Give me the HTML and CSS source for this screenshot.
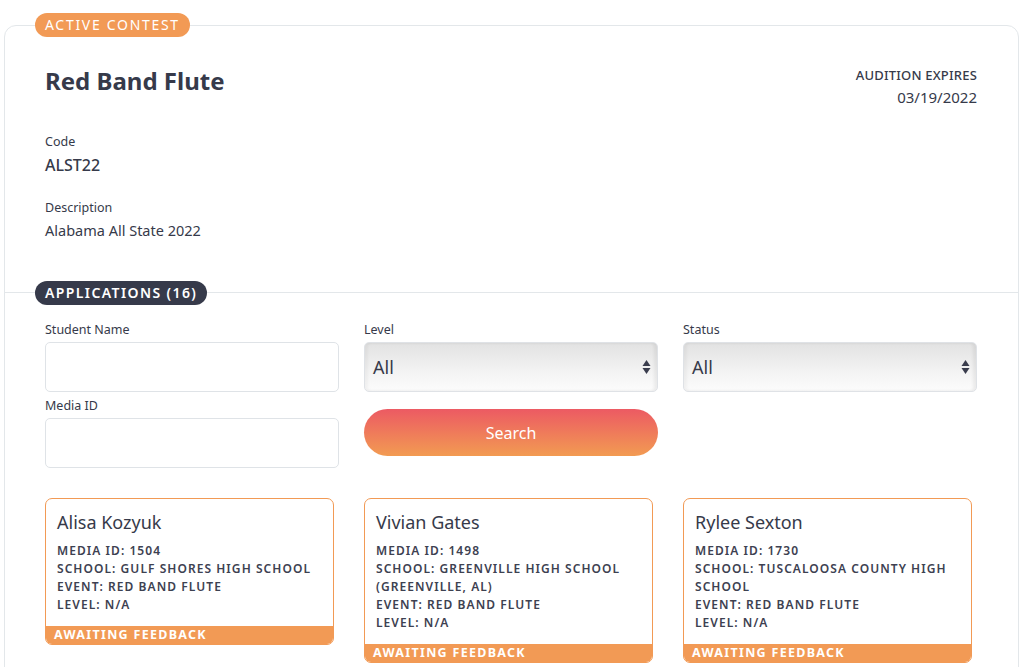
FILE: index.html
```html
<!DOCTYPE html>
<html lang="en">

<head>
  <meta charset="UTF-8">
  <meta name="viewport" content="width=device-width, initial-scale=1.0">
  <title>Red Band Flute</title>
  <link rel="stylesheet" href="styles.css">
</head>

<body>

  <div class="contest-card">
    <!-- contest info -->
    <section class="section info">
      <span class="pill pill--orange">ACTIVE CONTEST</span>
      <div class="info__top">
        <h1 class="info__title">Red Band Flute</h1>
        <div class="expires">
          <div class="expires__label">AUDITION EXPIRES</div>
          <div class="expires__date">03/19/2022</div>
        </div>
      </div>
      <div class="field">
        <div class="field__label">Code</div>
        <div class="field__value field__value--code">ALST22</div>
      </div>
      <div class="field">
        <div class="field__label">Description</div>
        <div class="field__value">Alabama All State 2022</div>
      </div>
    </section>

    <!-- applications -->
    <section class="section apps">
      <span class="pill pill--dark">APPLICATIONS (16)</span>

      <div class="filters">
        <div class="filters__col">
          <label class="filters__label">Student Name</label>
          <input class="text-input" type="text">
          <label class="filters__label">Media ID</label>
          <input class="text-input" type="text">
        </div>
        <div class="filters__col">
          <label class="filters__label">Level</label>
          <div class="select">
            <span>All</span>
            <svg class="select__arrows" width="9" height="16" viewBox="0 0 9 16">
              <path d="M4.5 1 L8.5 7 L0.5 7 Z" fill="#3a3d4d" />
              <path d="M4.5 15 L8.5 9 L0.5 9 Z" fill="#3a3d4d" />
            </svg>
          </div>
          <button class="search-btn">Search</button>
        </div>
        <div class="filters__col">
          <label class="filters__label">Status</label>
          <div class="select">
            <span>All</span>
            <svg class="select__arrows" width="9" height="16" viewBox="0 0 9 16">
              <path d="M4.5 1 L8.5 7 L0.5 7 Z" fill="#3a3d4d" />
              <path d="M4.5 15 L8.5 9 L0.5 9 Z" fill="#3a3d4d" />
            </svg>
          </div>
        </div>
      </div>

      <div class="app-list">
        <div class="app-card">
          <div class="app-card__body">
            <div class="app-card__name">Alisa Kozyuk</div>
            <div class="app-card__row">MEDIA ID: 1504</div>
            <div class="app-card__row">SCHOOL: GULF SHORES HIGH SCHOOL</div>
            <div class="app-card__row">EVENT: RED BAND FLUTE</div>
            <div class="app-card__row">LEVEL: N/A</div>
          </div>
          <div class="app-card__status">AWAITING FEEDBACK</div>
        </div>
        <div class="app-card">
          <div class="app-card__body">
            <div class="app-card__name">Vivian Gates</div>
            <div class="app-card__row">MEDIA ID: 1498</div>
            <div class="app-card__row">SCHOOL: GREENVILLE HIGH SCHOOL (GREENVILLE, AL)</div>
            <div class="app-card__row">EVENT: RED BAND FLUTE</div>
            <div class="app-card__row">LEVEL: N/A</div>
          </div>
          <div class="app-card__status">AWAITING FEEDBACK</div>
        </div>
        <div class="app-card">
          <div class="app-card__body">
            <div class="app-card__name">Rylee Sexton</div>
            <div class="app-card__row">MEDIA ID: 1730</div>
            <div class="app-card__row">SCHOOL: TUSCALOOSA COUNTY HIGH SCHOOL</div>
            <div class="app-card__row">EVENT: RED BAND FLUTE</div>
            <div class="app-card__row">LEVEL: N/A</div>
          </div>
          <div class="app-card__status">AWAITING FEEDBACK</div>
        </div>
      </div>
    </section>
  </div>

</body>

</html>
```

FILE: styles.css
```css
body {
  margin: 0;
  padding: 25px 5px 0 4px;
  font-family: "Noto Sans", "Open Sans", sans-serif;
  color: #363a4a;
  background: #fff;
  overflow: hidden;
}

.contest-card {
  border: 1px solid #e3e7ea;
  border-radius: 12px;
  height: 700px;
}

.section {
  position: relative;
  padding: 0 41px 0 40px;
}

/* pills sitting on the borders */
.pill {
  position: absolute;
  left: 30px;
  height: 24px;
  line-height: 24px;
  padding: 0 10px;
  border-radius: 12px;
  font-size: 14px;
  letter-spacing: 1.7px;
  color: #fff;
}

.pill--orange {
  top: -13px;
  background: #f29a55;
}

.pill--dark {
  top: -12px;
  background: #363a4a;
  font-weight: 600;
  letter-spacing: 1.4px;
}

/* info */
.info {
  padding-top: 40px;
  padding-bottom: 52px;
}

.info__top {
  display: flex;
  justify-content: space-between;
  align-items: flex-start;
}

.info__title {
  margin: 0;
  font-size: 24px;
  line-height: 30px;
  font-weight: 700;
}

.expires {
  text-align: right;
}

.expires__label {
  font-size: 13px;
  line-height: 18px;
  font-weight: 500;
  letter-spacing: 0.2px;
}

.expires__date {
  margin-top: 3px;
  font-size: 15px;
  line-height: 20px;
}

.field {
  margin-top: 26px;
}

.field + .field {
  margin-top: 23px;
}

.field__label {
  font-size: 12.5px;
  line-height: 18px;
}

.field__value {
  margin-top: 3px;
  font-size: 14.5px;
  line-height: 20px;
}

.field__value--code {
  font-size: 16px;
  line-height: 22px;
  font-weight: 500;
}

/* applications */
.apps {
  border-top: 1px solid #e3e7ea;
  padding-top: 28px;
}

.filters {
  display: grid;
  grid-template-columns: repeat(3, 294px);
  column-gap: 25px;
}

.filters__col {
  display: flex;
  flex-direction: column;
}

.filters__label {
  font-size: 12.5px;
  line-height: 18px;
  margin-bottom: 3px;
}

.text-input {
  box-sizing: border-box;
  height: 50px;
  border: 1px solid #dfe3e7;
  border-radius: 5px;
  margin: 0 0 5px;
  padding: 0 10px;
}

.select {
  position: relative;
  box-sizing: border-box;
  height: 50px;
  border: 1px solid #dfe2e6;
  border-radius: 5px;
  padding: 0 8px;
  display: flex;
  align-items: center;
  font-size: 18px;
  background: linear-gradient(#e2e2e2, #f3f3f3 60%, #fcfcfc);
  box-shadow: inset -3px 0 3px rgba(0, 0, 0, 0.06), inset 3px 0 3px rgba(0, 0, 0, 0.04);
}

.select__arrows {
  position: absolute;
  right: 6px;
  top: 16px;
}

.search-btn {
  margin-top: 17px;
  height: 47px;
  border: none;
  border-radius: 24px;
  background: linear-gradient(#ec5a63, #f29b52);
  color: #fff;
  font-family: inherit;
  font-size: 16px;
}

.app-list {
  display: grid;
  grid-template-columns: repeat(3, 289px);
  column-gap: 30px;
  align-items: start;
  margin-top: 25px;
}

.app-card {
  border: 1px solid #f29a55;
  border-radius: 7px;
  overflow: hidden;
}

.app-card__body {
  padding: 11px 14px 12px 11px;
}

.app-card__name {
  font-size: 18px;
  line-height: 24px;
  margin-bottom: 8px;
}

.app-card__row {
  font-size: 12px;
  line-height: 18px;
  letter-spacing: 1.05px;
  font-weight: 600;
  color: #3d4151;
}

.app-card__status {
  background: #f29a55;
  color: #fff;
  font-size: 12.5px;
  line-height: 18px;
  letter-spacing: 1.3px;
  font-weight: 700;
  padding: 0 8px;
}
```
